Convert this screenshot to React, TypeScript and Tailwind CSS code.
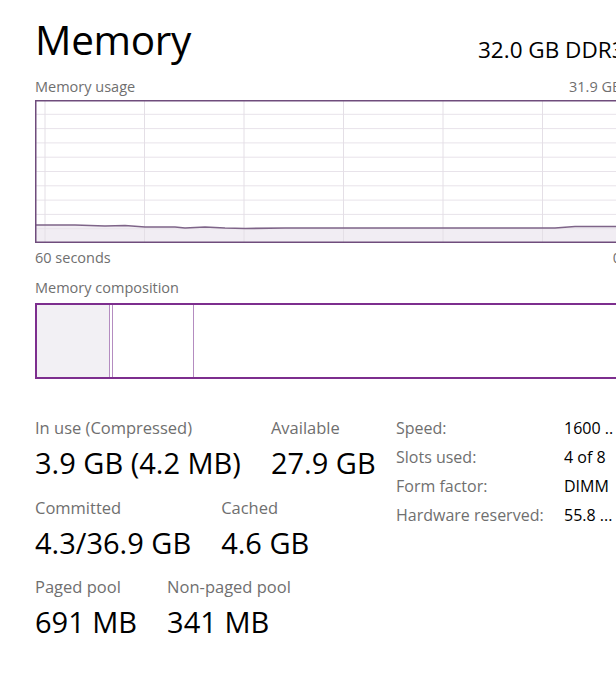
import React from 'react'

const font = { fontFamily: '"Open Sans", "Noto Sans", Arial, sans-serif' }

// memory line points (x in px from graph left, y from graph top)
const linePts: [number, number][] = [
  [0, 125], [40, 125], [70, 126], [90, 125.5], [110, 127], [140, 127], [150, 128], [170, 127], [190, 128], [210, 128.5], [250, 128], [300, 128], [400, 128], [520, 128], [540, 126.5], [630, 126.5],
]

function UsageGraph() {
  const w = 630
  const h = 143
  const rows = Array.from({ length: 9 }, (_, i) => (i + 1) * (h / 10))
  const cols = Array.from({ length: 7 }, (_, i) => 10 + i * 99.5)
  const path = linePts.map((p, i) => `${i === 0 ? 'M' : 'L'}${p[0]},${p[1]}`).join(' ')
  return (
    <svg width={w} height={h} className="block">
      <rect x={0} y={0} width={w} height={h} fill="#ffffff" />
      <path d={`${path} L${w},${h} L0,${h} Z`} fill="#f1edf3" />
      {rows.map((y) => (
        <line key={y} x1={0} x2={w} y1={y} y2={y} stroke="#e8e3ea" strokeWidth={1} />
      ))}
      {cols.map((x) => (
        <line key={x} x1={x} x2={x} y1={0} y2={h} stroke="#e4dfe6" strokeWidth={1} />
      ))}
      <path d={path} fill="none" stroke="#7e6488" strokeWidth={1.6} />
      <rect x={0.75} y={0.75} width={w - 1.5} height={h - 1.5} fill="none" stroke="#6f4c7c" strokeWidth={1.5} />
    </svg>
  )
}

function Stat({ label, value }: { label: string; value: string }) {
  return (
    <div className="flex flex-col">
      <div className="text-[16.5px] leading-[20px] text-[#6f6f6f]">{label}</div>
      <div className="mt-[10px] text-[29px] leading-[30px] text-black whitespace-nowrap">{value}</div>
    </div>
  )
}

const info = [
  ['Speed:', '1600 ..'],
  ['Slots used:', '4 of 8'],
  ['Form factor:', 'DIMM'],
  ['Hardware reserved:', '55.8 ...'],
]

export default function App() {
  return (
    <div className="w-[616px] h-[700px] overflow-hidden bg-white" style={font}>
      <div className="w-[700px] pl-[35px] pt-[15px]">
        <div className="flex items-end w-[630px]">
          <div className="text-[40.5px] leading-[50px] text-black tracking-[-0.3px]">Memory</div>
          <div className="ml-auto mr-[-10px] text-[22.5px] leading-[28px] text-black pb-[1px] w-[197px] whitespace-nowrap">32.0 GB DDR3</div>
        </div>
        <div className="flex w-[630px] mt-[13px] text-[14.5px] leading-[18px] text-[#6f6f6f]">
          <div>Memory usage</div>
          <div className="ml-auto mr-[10px] w-[86px] whitespace-nowrap">31.9 GB</div>
        </div>
        <div className="mt-[4px]">
          <UsageGraph />
        </div>
        <div className="flex w-[630px] mt-[6px] text-[14.5px] leading-[18px] text-[#6f6f6f]">
          <div>60 seconds</div>
          <div className="ml-auto mr-[44px]">0</div>
        </div>
        <div className="mt-[12px] text-[14.5px] leading-[18px] text-[#6f6f6f]">Memory composition</div>
        <div className="mt-[6px] w-[630px] h-[76px] border-2 border-[#7d2e8e] flex">
          <div className="w-[73px] h-full bg-[#f2f0f4] border-r border-[#b48cc0]" />
          <div className="w-[2px] h-full" />
          <div className="w-[82px] h-full border-l border-r border-[#b48cc0]" />
          <div className="flex-1" />
        </div>
        <div className="flex mt-[39px]">
          <div className="flex flex-col w-[361px] gap-[19.5px]">
            <div className="flex gap-[30px]">
              <Stat label="In use (Compressed)" value="3.9 GB (4.2 MB)" />
              <Stat label="Available" value="27.9 GB" />
            </div>
            <div className="flex gap-[30px]">
              <Stat label="Committed" value="4.3/36.9 GB" />
              <Stat label="Cached" value="4.6 GB" />
            </div>
            <div className="flex gap-[30px]">
              <Stat label="Paged pool" value="691 MB" />
              <Stat label="Non-paged pool" value="341 MB" />
            </div>
          </div>
          <div className="flex flex-col -mt-[5px]">
            {info.map(([k, v]) => (
              <div key={k} className="flex h-[29px] items-center text-[16px]">
                <div className="w-[168px] text-[#6f6f6f]">{k}</div>
                <div className="text-black whitespace-nowrap">{v}</div>
              </div>
            ))}
          </div>
        </div>
      </div>
    </div>
  )
}
